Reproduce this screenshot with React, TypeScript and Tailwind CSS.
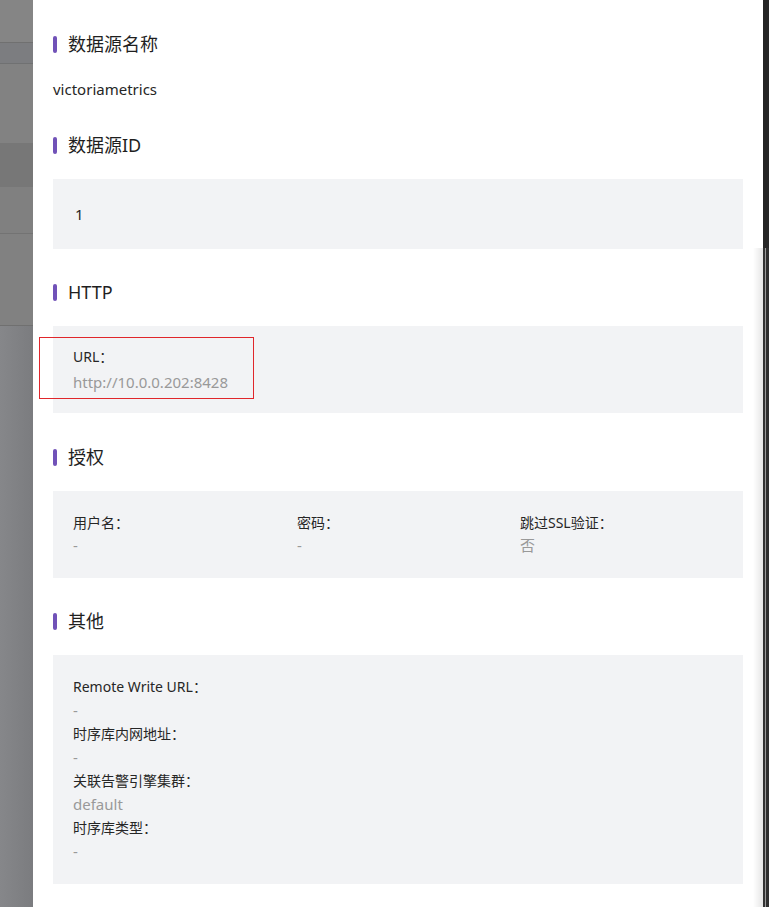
const font = { fontFamily: '"Noto Sans", "Noto Sans CJK SC", sans-serif' };

function SectionTitle({ title }: { title: string }) {
  return (
    <div className="flex items-center h-[24px] mb-[22px]">
      <span className="w-[4px] h-[17px] rounded-full bg-[#7152b8] mr-[11px]" />
      <h3 className="text-[18px] leading-[24px] text-[#1f1f1f]">{title}</h3>
    </div>
  );
}

function Field({ label, value }: { label: string; value: string }) {
  return (
    <div className="flex flex-col">
      <span className="text-[14px] leading-[22px] text-[#262626]">{label}：</span>
      <span className="text-[15px] leading-[22px] text-[#999]">{value}</span>
    </div>
  );
}

const sideBands = [
  { h: "h-[42px]", c: "bg-[#858585]" },
  { h: "h-[1px]", c: "bg-[#707070]" },
  { h: "h-[20px]", c: "bg-[#7c7d80]" },
  { h: "h-[1px]", c: "bg-[#707172]" },
  { h: "h-[79px]", c: "bg-[#828282]" },
  { h: "h-[44px]", c: "bg-[#777777]" },
  { h: "h-[46px]", c: "bg-[#808080]" },
  { h: "h-[1px]", c: "bg-[#737373]" },
  { h: "h-[91px]", c: "bg-[#818181]" },
  { h: "h-[1px]", c: "bg-[#707070]" },
];

const others = [
  { label: "Remote Write URL", value: "-" },
  { label: "时序库内网地址", value: "-" },
  { label: "关联告警引擎集群", value: "default" },
  { label: "时序库类型", value: "-" },
];

export default function App() {
  return (
    <div className="flex h-[907px] w-[769px] overflow-hidden bg-white" style={font}>
      <div className="w-[33px] flex flex-col shrink-0">
        {sideBands.map((b, i) => (
          <div key={i} className={`${b.h} ${b.c}`} />
        ))}
        <div className="flex-1 bg-linear-to-r from-[#86878a] to-[#7b7c7f]" />
      </div>

      <div className="relative flex-1 bg-white px-[20px] pt-[32px]">
        <div className="absolute right-0 top-[248px] bottom-0 w-[10px] bg-linear-to-r from-transparent to-black/10" />

        <SectionTitle title="数据源名称" />
        <div className="text-[15px] leading-[22px] text-[#262626]">victoriametrics</div>

        <div className="mt-[33px]">
          <SectionTitle title="数据源ID" />
          <div className="bg-[#f2f3f5] px-[22px] py-[24px] text-[15px] leading-[22px] text-[#262626]">1</div>
        </div>

        <div className="mt-[31px]">
          <SectionTitle title="HTTP" />
          <div className="relative bg-[#f2f3f5] px-[20px] pt-[20px] pb-[20px]">
            <div className="flex flex-col gap-[3px]">
              <span className="text-[14px] leading-[22px] text-[#262626]">URL：</span>
              <span className="text-[15px] leading-[22px] text-[#999]">http://10.0.0.202:8428</span>
            </div>
            <div className="absolute -left-[14px] top-[11px] w-[215px] h-[62px] border border-[#e0262b]" />
          </div>
        </div>

        <div className="mt-[32px]">
          <SectionTitle title="授权" />
          <div className="bg-[#f2f3f5] px-[20px] pt-[21px] pb-[22px] grid grid-cols-[224px_223px_1fr]">
            <Field label="用户名" value="-" />
            <Field label="密码" value="-" />
            <Field label="跳过SSL验证" value="否" />
          </div>
        </div>

        <div className="mt-[31px]">
          <SectionTitle title="其他" />
          <div className="bg-[#f2f3f5] px-[20px] pt-[20px] pb-[21px] flex flex-col">
            {others.map((o) => (
              <div key={o.label} className="flex flex-col">
                <span className="text-[14px] leading-[23px] text-[#262626]">{o.label}：</span>
                <span className="text-[15px] leading-[24px] text-[#999]">{o.value}</span>
              </div>
            ))}
          </div>
        </div>
      </div>

      <div className="w-[6px] shrink-0 flex flex-col">
        <div className="h-[248px] bg-[#262626]" />
        <div className="flex-1 flex">
          <div className="w-[2px] bg-[#333]" />
          <div className="w-[1px] bg-[#9a9a9a]" />
          <div className="flex-1 bg-[#2e2e2e]" />
        </div>
      </div>
    </div>
  );
}
